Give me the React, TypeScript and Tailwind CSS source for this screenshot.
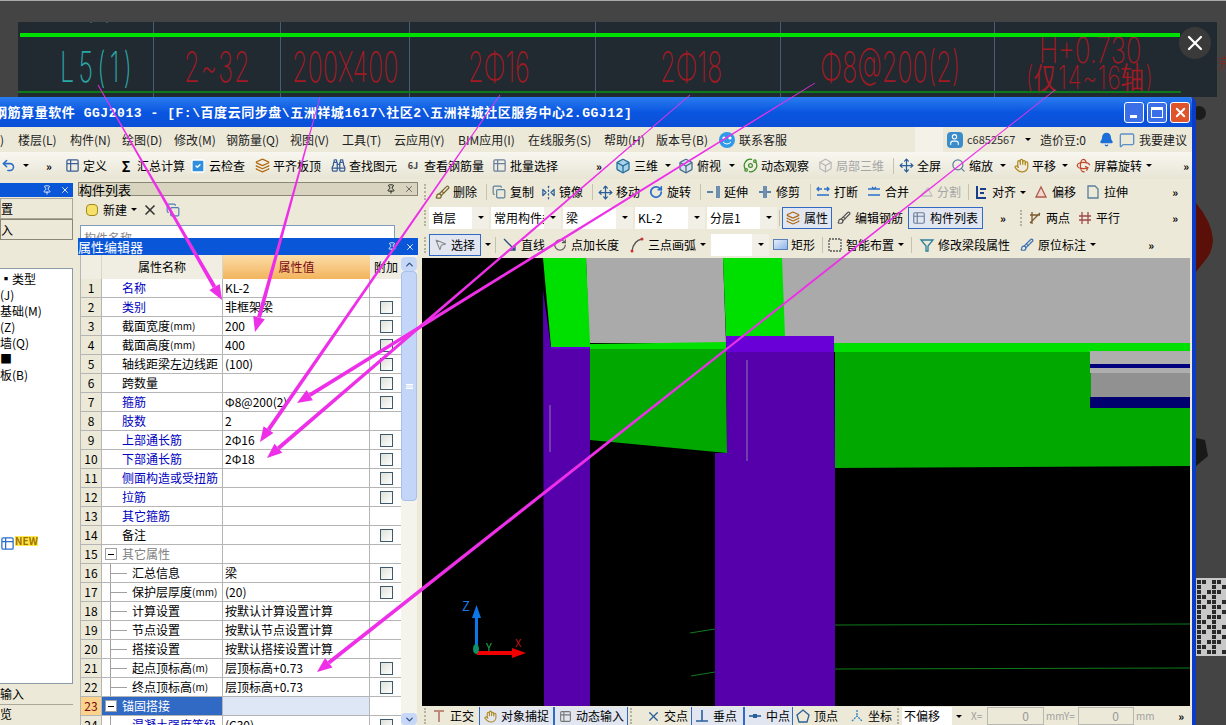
import type { ReactNode } from "react";
import {
  Bell,
  Binoculars,
  Box,
  Brush,
  ChevronDown,
  ChevronUp,
  Copy,
  FlipHorizontal2,
  Hand,
  Layers,
  MessageSquare,
  MousePointer2,
  Move,
  Orbit,
  Pin,
  Rotate3d,
  RotateCw,
  Search,
  SquareCheck,
  Table2,
  Undo2,
  User,
  X,
} from "lucide-react";

type Row = {
  name: string;
  value?: string;
  tone?: "blue" | "black" | "gray";
  box?: boolean;
  tree?: boolean;
  group?: boolean;
  selected?: boolean;
};

const rows: Row[] = [
  { name: "名称", value: "KL-2", tone: "blue" },
  { name: "类别", value: "非框架梁", tone: "blue", box: true },
  { name: "截面宽度(mm)", value: "200", box: true },
  { name: "截面高度(mm)", value: "400", box: true },
  { name: "轴线距梁左边线距", value: "(100)", box: true },
  { name: "跨数量", box: true },
  { name: "箍筋", value: "Φ8@200(2)", tone: "blue", box: true },
  { name: "肢数", value: "2", tone: "blue" },
  { name: "上部通长筋", value: "2Φ16", tone: "blue", box: true },
  { name: "下部通长筋", value: "2Φ18", tone: "blue", box: true },
  { name: "侧面构造或受扭筋", tone: "blue", box: true },
  { name: "拉筋", tone: "blue", box: true },
  { name: "其它箍筋", tone: "blue" },
  { name: "备注", box: true },
  { name: "其它属性", tone: "gray", group: true },
  { name: "汇总信息", value: "梁", box: true, tree: true },
  { name: "保护层厚度(mm)", value: "(20)", box: true, tree: true },
  { name: "计算设置", value: "按默认计算设置计算", tree: true },
  { name: "节点设置", value: "按默认节点设置计算", tree: true },
  { name: "搭接设置", value: "按默认搭接设置计算", tree: true },
  { name: "起点顶标高(m)", value: "层顶标高+0.73", box: true, tree: true },
  { name: "终点顶标高(m)", value: "层顶标高+0.73", box: true, tree: true },
  { name: "锚固搭接", group: true, selected: true },
  { name: "混凝土强度等级", value: "(C30)", tone: "blue", box: true, tree: true },
];

const menus = [
  [")", "w-[18px]"],
  ["楼层(L)", "w-[52px]"],
  ["构件(N)", "w-[52px]"],
  ["绘图(D)", "w-[52px]"],
  ["修改(M)", "w-[52px]"],
  ["钢筋量(Q)", "w-[64px]"],
  ["视图(V)", "w-[52px]"],
  ["工具(T)", "w-[52px]"],
  ["云应用(Y)", "w-[64px]"],
  ["BIM应用(I)", "w-[70px]"],
  ["在线服务(S)", "w-[76px]"],
  ["帮助(H)", "w-[52px]"],
  ["版本号(B)", "w-[62px]"],
];

// arrows from the drawing to the property table: start, tip
const arrows = [
  [98, 85, 222, 300],
  [320, 97, 255, 332],
  [500, 95, 260, 442],
  [690, 95, 267, 458],
  [815, 83, 297, 403],
  [1055, 90, 317, 672],
];

function Arrow({ a }: { a: number[] }) {
  const [x1, y1, x2, y2] = a;
  const len = Math.hypot(x2 - x1, y2 - y1);
  const ux = (x2 - x1) / len;
  const uy = (y2 - y1) / len;
  const nx = -uy;
  const ny = ux;
  const bx = x2 - ux * 15;
  const by = y2 - uy * 15;
  const p = (x: number, y: number, w: number) => `${x + nx * w},${y + ny * w}`;
  return (
    <g fill="#ee2fe8">
      <polygon points={[p(x1, y1, 0.4), p(bx, by, 2), p(bx, by, -2), p(x1, y1, -0.4)].join(" ")} />
      <polygon points={[p(bx, by, 6), `${x2},${y2}`, p(bx, by, -6)].join(" ")} />
    </g>
  );
}

function Chevrons() {
  return <span className="text-[11px] font-bold leading-none text-black">»</span>;
}

function Caret() {
  return <span className="ml-auto mr-[5px] h-0 w-0 border-x-[3px] border-t-[3px] border-x-transparent border-t-black" />;
}

function Sep() {
  return <span className="mx-[2px] h-[16px] w-px shrink-0 bg-[#c5c2b0]" />;
}

function Grip() {
  return <span className="mx-[2px] h-[16px] w-[3px] shrink-0 border-l-2 border-dotted border-[#b5b29f]" />;
}

// latin part in brackets is drawn smaller, like the bitmap font of the app
function Label({ text }: { text: string }) {
  const parts = text.split(/(\([a-z]+\))/);
  return (
    <>
      {parts.map((p, i) =>
        p.startsWith("(") ? (
          <span key={i} className="text-[10px]">
            {p}
          </span>
        ) : (
          <span key={i}>{p}</span>
        ),
      )}
    </>
  );
}

function Tool({
  w,
  icon,
  label,
  caret,
  gray,
  active,
}: {
  w: string;
  icon?: ReactNode;
  label: string;
  caret?: boolean;
  gray?: boolean;
  active?: boolean;
}) {
  return (
    <div
      className={`flex h-[22px] shrink-0 items-center gap-[3px] whitespace-nowrap pl-[2px] ${w} ${
        active ? "border border-[#316ac5] bg-[#e1e6f0]" : ""
      } ${gray ? "text-[#a5a5a5]" : "text-black"}`}
    >
      {icon && <span className="flex h-[16px] w-[16px] shrink-0 items-center justify-center">{icon}</span>}
      <span>{label}</span>
      {caret && <Caret />}
    </div>
  );
}

function Field({ w, text }: { w: string; text: string }) {
  return (
    <div className={`flex h-[22px] shrink-0 items-center overflow-hidden whitespace-nowrap bg-white pl-[3px] ${w}`}>
      <span className="w-full overflow-hidden">{text}</span>
      <span className="flex h-full w-[17px] shrink-0 items-center justify-center bg-[#f1efe6]">
        <span className="h-0 w-0 border-x-[3px] border-t-[3px] border-x-transparent border-t-black" />
      </span>
    </div>
  );
}

function Glyph({ children }: { children: ReactNode }) {
  return (
    <svg width="16" height="16" viewBox="0 0 16 16" fill="none" strokeWidth="1.3">
      {children}
    </svg>
  );
}

function CadCell({
  w,
  pad,
  color,
  text,
  prev,
  track = "",
}: {
  w: string;
  pad: string;
  color: string;
  text: ReactNode;
  prev?: string;
  track?: string;
}) {
  return (
    <div className={`relative flex h-full shrink-0 items-center overflow-hidden border-r border-[#4a5a78] ${w} ${pad}`}>
      {prev && <span className={`absolute left-[42px] top-[-37px] origin-left scale-x-[0.7] text-[34px] font-extralight ${color}`}>{prev}</span>}
      <span className={`origin-left scale-x-[0.6] whitespace-nowrap pt-[15px] text-[42px] font-extralight leading-none [font-family:Inter,sans-serif] ${color} ${track}`}>{text}</span>
    </div>
  );
}

function Panel3D() {
  return (
    <svg className="h-[448px] w-[768px] shrink-0" viewBox="422 258 768 448">
      <rect x="422" y="258" width="768" height="448" fill="#000" />
      <polygon points="782,258 1190,258 1190,343 782,343" fill="#aaaaaa" />
      <polygon points="586,258 723,258 726,343 589,343" fill="#aaaaaa" />
      <polygon points="543,258 586,258 590,343 590,347 551,347" fill="#00e000" />
      <polygon points="723,258 782,258 785,336 726,336" fill="#00e000" />
      <polygon points="590,344 726,342 726,349 590,349" fill="#00e000" />
      <polygon points="590,349 726,349 727,453 590,440" fill="#00a800" />
      <rect x="834" y="343" width="356" height="9" fill="#00e000" />
      <polygon points="835,352 1190,352 1190,466 835,468" fill="#00a800" />
      <polygon points="543,290 551,347 590,347 590,706 544,706" fill="#5500aa" />
      <rect x="551" y="347" width="39" height="2" fill="#6a00d8" />
      <polygon points="726,336 834,336 835,468 835,706 715,706 715,453 727,453" fill="#5500aa" />
      <rect x="726" y="336" width="108" height="16" fill="#6a00d8" />
      <line x1="747" y1="360" x2="747" y2="461" stroke="#8d7fb0" />
      <line x1="550" y1="405" x2="550" y2="452" stroke="#8d7fb0" />
      <rect x="1090" y="351" width="100" height="14" fill="#aeaeae" />
      <rect x="1090" y="364" width="100" height="4" fill="#00007f" />
      <rect x="1090" y="368" width="100" height="5" fill="#aeaeae" />
      <rect x="1091" y="373" width="99" height="24" fill="#919191" />
      <rect x="1090" y="397" width="100" height="11" fill="#00006e" />
      <g stroke="#0f7a1c">
        <line x1="690" y1="633" x2="715" y2="629" />
        <line x1="691" y1="676" x2="715" y2="672" />
        <line x1="835" y1="625" x2="1190" y2="624" />
        <line x1="835" y1="669" x2="1190" y2="668" />
      </g>
      <rect x="475" y="615" width="3" height="37" fill="#0a78e6" />
      <polygon points="476.5,605 472,618 481,618" fill="#0a78e6" />
      <rect x="477" y="651" width="36" height="4" fill="#f00000" />
      <polygon points="526,653 512,648 512,658" fill="#f00000" />
      <ellipse cx="476" cy="649" rx="3" ry="5" fill="#0f8f6a" />
      <text x="462" y="611" fontSize="13" fill="#1e78e6">Z</text>
      <text x="486" y="651" fontSize="11" fill="#19b04a">Y</text>
      <text x="515" y="647" fontSize="11" fill="#c01010">X</text>
    </svg>
  );
}

function PropertyTable() {
  return (
    <div className="flex min-h-0 flex-1 pl-[2px]">
      <div className="w-[321px] shrink-0 overflow-hidden border-l border-[#b5b5b5] bg-white">
        <div className="grid h-[24px] grid-cols-[21px_121px_147px_32px] bg-[#f0eee2]">
          <div className="border-r border-[#d8d6c8]" />
          <div className="flex items-center justify-center border-r border-[#d8d6c8]">属性名称</div>
          <div className="flex items-center justify-center bg-gradient-to-b from-[#fbdca6] to-[#f2b45c] text-[#7a0a14]">属性值</div>
          <div className="flex items-center justify-center">附加</div>
        </div>
        {rows.map((r, i) => (
          <div key={r.name} className="grid h-[19px] grid-cols-[21px_121px_147px_32px]">
            <div
              className={`flex items-center justify-center border-b border-r border-[#b5b5b5] ${
                r.selected ? "bg-[#fbd38a] text-[#7a0a14]" : "bg-[#ece9d8]"
              }`}
            >
              {i + 1}
            </div>
            <div
              className={`relative flex items-center overflow-hidden whitespace-nowrap border-b border-r border-[#b5b5b5] ${
                r.selected
                  ? "bg-[#316ac5] pl-[20px] text-white"
                  : r.tree
                    ? "pl-[30px]"
                    : "pl-[20px]"
              } ${r.tone === "blue" ? "text-[#0000c0]" : r.tone === "gray" ? "text-[#808080]" : r.selected ? "" : "text-black"}`}
            >
              {r.group && (
                <span className="absolute left-[3px] top-[3px] flex h-[12px] w-[12px] items-center justify-center border border-[#a0a0a0] bg-white">
                  <span className="h-px w-[6px] bg-black" />
                </span>
              )}
              {r.tree && (
                <>
                  <span className="absolute left-[8px] top-0 h-full w-px bg-[#a0a0a0]" />
                  <span className="absolute left-[9px] top-[9px] h-px w-[16px] bg-[#a0a0a0]" />
                </>
              )}
              <Label text={r.name} />
            </div>
            <div
              className={`flex items-center overflow-hidden whitespace-nowrap border-b border-r border-[#b5b5b5] pl-[2px] ${
                r.selected ? "bg-[#dde7f5]" : ""
              } text-black`}
            >
              {r.value}
            </div>
            <div className="flex items-center justify-center border-b border-[#b5b5b5]">
              {r.box && <span className="h-[13px] w-[13px] border border-[#3d5a6c] bg-gradient-to-br from-[#e0e0d8] to-white" />}
            </div>
          </div>
        ))}
      </div>
      <div className="flex w-[16px] shrink-0 flex-col bg-[#f4f3ec]">
        <div className="mt-[2px] flex h-[14px] items-center justify-center rounded-sm bg-[#c6d7f7]">
          <ChevronUp size={11} strokeWidth={3} color="#33558a" />
        </div>
        <div className="flex h-[230px] items-center justify-center rounded-sm border border-[#a7c0ee] bg-[#c3d6f7]">
          <span className="h-[5px] w-[7px] border-y border-white bg-[#e2ecfc]" />
        </div>
        <div className="flex-1" />
        <div className="flex h-[12px] items-center justify-center rounded-sm bg-[#c6d7f7]">
          <ChevronDown size={11} strokeWidth={3} color="#33558a" />
        </div>
      </div>
    </div>
  );
}

export default function App() {
  return (
    <div className="relative h-[725px] w-[1226px] overflow-hidden bg-[#444444] text-[12px] leading-none text-black [font-family:'Noto_Sans_CJK_SC',sans-serif]">
      {/* things behind the lightbox on the right edge */}
      <svg className="absolute inset-0" width="1226" height="725">
        <rect x="0" y="0" width="1226" height="1" fill="#a8a8a8" />
        <text x="1218" y="68" fontSize="14" fill="#7a2a22">完</text>
        <circle cx="1199" cy="113" r="7" fill="#1c1c1c" />
        <path d="M1196 203 Q1212 222 1213 240 Q1212 252 1207 258 L1196 272 Z" fill="#5a1008" />
        <path d="M1196 438 L1205 440 L1208 456 L1196 466 Z" fill="#191919" />
        <rect x="1196" y="578" width="30" height="78" fill="#c8c8c8" />
        {Array.from({ length: 90 }, (_, i) => (
          <rect
            key={i}
            x={1197 + (i % 6) * 5}
            y={580 + Math.floor(i / 6) * 5}
            width="4"
            height="4"
            fill={(i * 7) % 3 === 0 || (i * i) % 5 === 1 ? "#2a2a2a" : "#c8c8c8"}
          />
        ))}
      </svg>

      {/* drawing preview */}
      <div className="relative h-[97px] pl-[18px] pt-[22px]">
        <div className="relative flex h-[75px] w-[1199px] bg-[#222a31]">
          <CadCell w="w-[136px]" pad="pl-[42px]" color="text-[#2aa7a7]" text="L5(1)" prev="L4(1)" track="tracking-[7px]" />
          <CadCell w="w-[127px]" pad="pl-[30px]" color="text-[#a01a24]" text="2~32" prev="2~32" track="tracking-[2px]" />
          <CadCell w="w-[129px]" pad="pl-[11px]" color="text-[#a01a24]" text="200X400" />
          <CadCell w="w-[186px]" pad="pl-[58px]" color="text-[#a01a24]" text="2Φ16" />
          <CadCell w="w-[185px]" pad="pl-[64px]" color="text-[#a01a24]" text="2Φ18" />
          <CadCell w="w-[214px]" pad="pl-[39px]" color="text-[#a01a24]" text="Φ8@200(2)" />
          <div className="flex h-full w-[190px] flex-col items-center pt-[14px] text-[36px] font-extralight leading-[28px] text-[#a01a24] [font-family:Inter,sans-serif]">
            <span className="scale-x-[0.72] whitespace-nowrap">H+0.730</span>
            <span className="scale-x-[0.72] whitespace-nowrap text-[32px] tracking-[1px]">(仅14~16轴)</span>
          </div>
          <span className="absolute left-[2px] top-[11px] h-[4px] w-[1160px] bg-[#00e000]" />
          <span className="absolute left-0 top-[69px] h-[2px] w-[1163px] bg-[#0c7a18]" />
        </div>
      </div>

      {/* application window */}
      <div className="relative flex h-[628px] w-[1196px] flex-col overflow-hidden rounded-tr-[6px] border-r-[4px] border-[#0a3cc8] bg-[#ece9d8]">
        <div className="flex h-[30px] shrink-0 items-center bg-gradient-to-b from-[#2a7cf0] via-[#0a56e0] to-[#0a4fd8] pr-[2px]">
          <span className="-ml-[6px] pt-[2px] whitespace-nowrap text-[13px] font-bold tracking-[0.55px] text-white [font-family:'Liberation_Mono','Noto_Sans_CJK_SC',monospace]">
            钢筋算量软件 GGJ2013 - [F:\百度云同步盘\五洲祥城1617\社区2\五洲祥城社区服务中心2.GGJ12]
          </span>
          <div className="ml-auto flex gap-[3px]">
            <div className="flex h-[21px] w-[20px] items-end justify-start rounded-[3px] border border-white bg-[#3a6fe8] pb-[4px] pl-[5px]">
              <span className="h-[3px] w-[7px] bg-white" />
            </div>
            <div className="flex h-[21px] w-[20px] items-center justify-center rounded-[3px] border border-white bg-[#3a6fe8]">
              <span className="h-[11px] w-[12px] border border-t-[3px] border-white" />
            </div>
            <div className="flex h-[21px] w-[20px] items-center justify-center rounded-[3px] border border-white bg-[#e0542c]">
              <X size={15} color="#fff" strokeWidth={3} />
            </div>
          </div>
        </div>

        <div className="flex h-[25px] shrink-0 items-center text-[#222]">
          {menus.map(([t, w]) => (
            <span key={t} className={`shrink-0 whitespace-nowrap ${w}`}>
              {t}
            </span>
          ))}
          <Smiley />
          <span className="ml-[3px]">联系客服</span>
          <div className="ml-auto flex h-full items-center pr-[5px]">
            <span className="mr-[4px] h-full w-[28px] bg-[#f3f1e8]" />
            <span className="mr-[4px] flex h-[16px] w-[16px] items-center justify-center rounded-sm bg-[#3b8ccb]">
              <User size={13} color="#fff" />
            </span>
            <span className="w-[58px] text-[11px] text-[#333]">c6852567</span>
            <span className="mr-[9px] h-0 w-0 border-x-[3px] border-t-[3px] border-x-transparent border-t-black" />
            <span className="w-[59px]">造价豆:0</span>
            <Bell size={15} color="#1c6fd8" fill="#1c6fd8" />
            <MessageSquare size={16} color="#5d8fc9" className="ml-[5px] mr-[4px]" />
            <span>我要建议</span>
          </div>
        </div>

        <div className="flex h-[27px] shrink-0 items-center bg-gradient-to-b from-[#f8f7f0] to-[#e8e5d5]">
          <div className="flex w-[46px] shrink-0 items-center pl-[1px]">
            <Undo2 size={15} color="#2a6fc9" strokeWidth={2.5} />
            <span className="ml-[7px] h-0 w-0 border-x-[3px] border-t-[3px] border-x-transparent border-t-black" />
          </div>
          <span className="w-[16px] shrink-0"><Chevrons /></span>
          <Tool w="w-[54px]" icon={<Table2 size={15} color="#3a5f96" />} label="定义" />
          <Tool w="w-[72px]" icon={<b className="text-[14px]">Σ</b>} label="汇总计算" />
          <Tool w="w-[64px]" icon={<SquareCheck size={16} color="#fff" fill="#2f8fdd" />} label="云检查" />
          <Tool w="w-[76px]" icon={<Layers size={15} color="#b06a10" />} label="平齐板顶" />
          <Tool w="w-[75px]" icon={<Binoculars size={15} color="#3a5f96" />} label="查找图元" />
          <Tool w="w-[86px]" icon={<span className="text-[9px] font-bold text-[#444]">6J</span>} label="查看钢筋量" />
          <Tool w="w-[107px]" icon={<Table2 size={15} color="#6a7f9a" />} label="批量选择" />
          <span className="w-[17px] shrink-0"><Chevrons /></span>
          <Tool w="w-[63px]" icon={<Box size={16} color="#2a6f9a" fill="#a8d4ea" />} label="三维" caret />
          <Tool w="w-[64px]" icon={<Box size={16} color="#4a6f8a" fill="#d4e4ee" />} label="俯视" caret />
          <Tool w="w-[75px]" icon={<Orbit size={15} color="#3f8f2a" />} label="动态观察" />
          <Tool w="w-[76px]" icon={<Box size={15} color="#b8b8b8" />} label="局部三维" gray />
          <Sep />
          <Tool w="w-[52px]" icon={<Move size={15} color="#2a5f9a" />} label="全屏" />
          <Tool w="w-[63px]" icon={<Search size={15} color="#5f7f9a" />} label="缩放" caret />
          <Tool w="w-[62px]" icon={<Hand size={15} color="#b08a20" />} label="平移" caret />
          <Tool w="w-[84px]" icon={<Rotate3d size={15} color="#c04a2a" />} label="屏幕旋转" caret />
          <span className="ml-auto pr-[3px]"><Chevrons /></span>
        </div>

        <div className="flex min-h-0 flex-1">
          {/* module tree, cut off by the screen edge */}
          <div className="flex h-full w-[73px] shrink-0 flex-col pt-[4px]">
            <div className="flex h-[14px] shrink-0 items-center justify-end gap-[8px] bg-[#0a56d8] pr-[3px]">
              <Pin size={10} color="#fff" />
              <X size={10} color="#fff" />
            </div>
            <div className="mt-px flex h-[21px] shrink-0 items-center border border-[#aca899] text-[12px]">置</div>
            <div className="flex h-[21px] shrink-0 items-center border border-[#8a8778] text-[12px]">入</div>
            <div className="mt-[28px] flex h-[416px] shrink-0 flex-col border-y border-r border-[#8c9aa8] bg-white pt-[2px]">
              {["▪类型", "(J)", "基础(M)", "(Z)", "墙(Q)", "■", "板(B)"].map((t) => (
                <span key={t} className="flex h-[16px] shrink-0 items-center whitespace-nowrap">
                  {t}
                </span>
              ))}
              <div className="mt-[153px] flex items-start">
                <Table2 size={15} color="#2a6fc9" />
                <span className="bg-[#ffe94a] text-[10px] font-bold text-[#a07000]">NEW</span>
              </div>
            </div>
            <div className="flex h-[21px] shrink-0 items-center border-b border-[#aca899]">输入</div>
            <div className="flex h-[18px] shrink-0 items-center">览</div>
          </div>

          {/* component list + property editor */}
          <div className="ml-[5px] flex h-full w-[340px] shrink-0 flex-col pt-[3px]">
            <div className="flex h-[14px] shrink-0 items-center border border-[#8a8778] bg-[#d8d4c0] pr-[3px] text-[13px]">
              <span>构件列表</span>
              <Pin size={10} className="ml-auto mr-[8px]" />
              <X size={10} color="#555" />
            </div>
            <div className="flex h-[27px] shrink-0 items-center pl-[4px]">
              <Tool w="w-[60px]" icon={<span className="h-[12px] w-[12px] rounded-sm border border-[#a08a20] bg-[#f6e06a]" />} label="新建" caret />
              <X size={16} color="#333" strokeWidth={2.5} />
              <Copy size={14} color="#4a7fb5" className="ml-[8px]" />
            </div>
            <div className="h-[15px] shrink-0 overflow-hidden pl-[2px] pt-[2px]">
              <div className="h-[18px] w-[315px] border border-[#7f9db9] bg-white pl-[3px] pt-[6px] text-[#888]">构件名称</div>
            </div>
            <div className="flex h-[17px] shrink-0 items-center bg-[#0a56d8] pr-[3px] text-[13px] text-white">
              <span>属性编辑器</span>
              <Pin size={10} color="#fff" className="ml-auto mr-[8px]" />
              <X size={10} color="#fff" />
            </div>
            <PropertyTable />
          </div>

          {/* drawing area */}
          <div className="ml-[4px] flex h-full w-[768px] shrink-0 flex-col">
            <div className="mt-px flex h-[24px] shrink-0 items-center">
              <Grip />
              <span className="w-[3px] shrink-0" />
              <Tool w="w-[52px]" icon={<Brush size={15} color="#7a6a30" />} label="删除" />
              <Sep />
              <Tool w="w-[49px]" icon={<Copy size={14} color="#5a7f9a" />} label="复制" />
              <Tool w="w-[52px]" icon={<FlipHorizontal2 size={15} color="#2a5f9a" />} label="镜像" />
              <Sep />
              <Tool w="w-[51px]" icon={<Move size={15} color="#2a5f9a" />} label="移动" />
              <Tool w="w-[52px]" icon={<RotateCw size={14} color="#2a6fc9" strokeWidth={3} />} label="旋转" />
              <Sep />
              <Tool w="w-[52px]" icon={<Glyph><path d="M2 8h6M12 2v12M14 2v12" stroke="#2a5f9a" /></Glyph>} label="延伸" />
              <Tool w="w-[53px]" icon={<Glyph><path d="M2 8h4M10 8h4M7 2v12M9 2v12" stroke="#2a5f9a" /></Glyph>} label="修剪" />
              <Sep />
              <Tool w="w-[51px]" icon={<Glyph><path d="M2 5h5M9 5h5M2 11h12M4 3l-2 2 2 2M12 3l2 2-2 2" stroke="#2a6fc9" /></Glyph>} label="打断" />
              <Tool w="w-[52px]" icon={<Glyph><path d="M2 5h12M2 11h12M6 3l2 2 2-2" stroke="#2a6fc9" /></Glyph>} label="合并" />
              <Tool w="w-[50px]" icon={<Glyph><path d="M2 12h12L10 4z" stroke="#c0c0c0" /></Glyph>} label="分割" gray />
              <Sep />
              <Tool w="w-[60px]" icon={<Glyph><path d="M4 2v12h9M7 5h6M7 9h4" stroke="#1a3f8a" strokeWidth="2" /></Glyph>} label="对齐" caret />
              <Tool w="w-[52px]" icon={<Glyph><path d="M3 13 L8 3 L13 13Z" stroke="#b05a4a" fill="#f0d8d0" /></Glyph>} label="偏移" />
              <Tool w="w-[52px]" icon={<Glyph><path d="M3 2h7l3 3v9H3z" stroke="#5a7f9a" /></Glyph>} label="拉伸" />
              <span className="ml-auto pr-[12px]"><Chevrons /></span>
            </div>
            <div className="flex h-[27px] shrink-0 items-center">
              <Grip />
              <Field w="w-[60px]" text="首层" />
              <Field w="w-[70px] ml-[2px]" text="常用构件类" />
              <Field w="w-[70px] ml-[2px]" text="梁" />
              <Field w="w-[70px] ml-[2px]" text="KL-2" />
              <Field w="w-[70px] ml-[2px]" text="分层1" />
              <Sep />
              <Tool w="w-[50px]" active icon={<Layers size={14} color="#b06a10" />} label="属性" />
              <Tool w="w-[74px] ml-[2px]" icon={<Brush size={14} color="#555" />} label="编辑钢筋" />
              <Tool w="w-[75px]" active icon={<Table2 size={14} color="#6a7f9a" />} label="构件列表" />
              <span className="w-[35px] shrink-0 pl-[17px]"><Chevrons /></span>
              <Grip />
              <Tool w="w-[50px]" icon={<Glyph><path d="M3 13L13 3M3 5h10M5 2v12" stroke="#7a5a30" /></Glyph>} label="两点" />
              <Tool w="w-[50px]" icon={<Glyph><path d="M5 2v12M11 2v12M2 6h12M2 10h12" stroke="#a04a4a" /></Glyph>} label="平行" />
              <span className="ml-auto pr-[12px]"><Chevrons /></span>
            </div>
            <div className="flex h-[27px] shrink-0 items-center">
              <Grip />
              <Tool w="w-[52px]" active icon={<MousePointer2 size={13} color="#888" />} label="选择" />
              <span className="w-[12px] shrink-0 pl-[4px]"><span className="block h-0 w-0 border-x-[3px] border-t-[3px] border-x-transparent border-t-black" /></span>
              <Sep />
              <span className="w-[2px] shrink-0" />
              <Tool w="w-[50px]" icon={<Glyph><path d="M2 2l11 11M13 8v5H8" stroke="#2a4f7a" /></Glyph>} label="直线" />
              <Tool w="w-[77px]" icon={<RotateCw size={14} color="#555" />} label="点加长度" />
              <Tool w="w-[84px]" icon={<Glyph><path d="M3 14C4 7 8 3 13 2" stroke="#555" /><circle cx="3" cy="14" r="1.5" fill="#d03030" /><circle cx="13" cy="2" r="1.5" fill="#d03030" /></Glyph>} label="三点画弧" caret />
              <Field w="w-[58px]" text="" />
              <span className="w-[1px] shrink-0" />
              <Tool w="w-[50px]" icon={<span className="h-[11px] w-[15px] border border-[#5a7fb5] bg-gradient-to-br from-[#e4eefa] to-[#8fb4e8]" />} label="矩形" />
              <Sep />
              <Tool w="w-[84px]" icon={<Glyph><path d="M2 2h12v12H2z" stroke="#555" strokeDasharray="2 1" /></Glyph>} label="智能布置" caret />
              <Sep />
              <span className="w-[3px] shrink-0" />
              <Tool w="w-[100px]" icon={<Glyph><path d="M2 3h12L9 9v5H7V9z" stroke="#2a7f9a" /></Glyph>} label="修改梁段属性" />
              <Tool w="w-[84px]" icon={<Brush size={14} color="#3a6fb5" />} label="原位标注" caret />
              <span className="ml-auto pr-[36px]"><Chevrons /></span>
            </div>
            <Panel3D />
            <div className="mt-px flex h-[18px] shrink-0 items-center overflow-hidden">
              <Grip />
              <Tool w="w-[50px]" icon={<Glyph><path d="M3 3h10M8 3v11" stroke="#c08a7a" strokeWidth="2" /></Glyph>} label="正交" />
              <Tool w="w-[75px]" active icon={<Hand size={13} color="#b08a20" />} label="对象捕捉" />
              <Tool w="w-[74px]" active icon={<Table2 size={13} color="#777" />} label="动态输入" />
              <Grip />
              <span className="w-[8px] shrink-0" />
              <Tool w="w-[48px]" icon={<X size={15} color="#2a5f9a" />} label="交点" />
              <Tool w="w-[53px]" active icon={<Glyph><path d="M8 2v11M2 13h12" stroke="#2a5f9a" strokeWidth="1.6" /></Glyph>} label="垂点" />
              <Tool w="w-[49px]" active icon={<Glyph><path d="M2 8h12" stroke="#2a5f9a" strokeWidth="1.6" /><rect x="6" y="6" width="4" height="4" fill="#2a5f9a" /></Glyph>} label="中点" />
              <Tool w="w-[54px]" icon={<Glyph><path d="M8 2l6 5-2 7H4L2 7z" stroke="#2a5f9a" /></Glyph>} label="顶点" />
              <Tool w="w-[48px]" icon={<Glyph><path d="M3 13L8 8l5 5M8 2v6" stroke="#2a7fc9" strokeDasharray="2 1" /></Glyph>} label="坐标" />
              <Grip />
              <div className="flex h-full w-[50px] shrink-0 items-center bg-white pl-[2px]">不偏移</div>
              <span className="w-[19px] shrink-0 pl-[4px]"><span className="block h-0 w-0 border-x-[3px] border-t-[3px] border-x-transparent border-t-black" /></span>
              <span className="w-[16px] shrink-0 text-[10px] text-[#a0a0a0]">X=</span>
              <div className="flex h-full w-[57px] shrink-0 items-center justify-end border border-[#b8b8b0] pr-[14px] text-[#999]">0</div>
              <span className="w-[20px] shrink-0 pl-[2px] text-[10px] text-[#a0a0a0]">mm</span>
              <span className="w-[14px] shrink-0 text-[10px] text-[#a0a0a0]">Y=</span>
              <div className="flex h-full w-[56px] shrink-0 items-center justify-end border border-[#b8b8b0] pr-[14px] text-[#999]">0</div>
              <span className="w-[20px] shrink-0 pl-[2px] text-[10px] text-[#a0a0a0]">mm</span>
              <span className="ml-auto pr-[6px]"><Chevrons /></span>
            </div>
          </div>
        </div>
      </div>

      {/* close button of the lightbox */}
      <div className="absolute left-[1179px] top-[27px] flex h-[32px] w-[32px] items-center justify-center rounded-full bg-[#3a3a3a]">
        <X size={24} color="#fff" strokeWidth={2.2} />
      </div>

      {/* hand-drawn arrows over the screenshot */}
      <svg className="pointer-events-none absolute inset-0" width="1226" height="725">
        {arrows.map((a) => (
          <Arrow key={a[0]} a={a} />
        ))}
      </svg>
    </div>
  );
}

function Smiley() {
  return (
    <svg width="18" height="18" viewBox="0 0 18 18">
      <circle cx="9" cy="9" r="8" fill="#2f9be8" />
      <circle cx="6" cy="7" r="1.6" fill="#fff" />
      <circle cx="12" cy="7" r="1.6" fill="#fff" />
      <path d="M5 11q4 4 8 0" stroke="#fff" fill="none" />
    </svg>
  );
}
